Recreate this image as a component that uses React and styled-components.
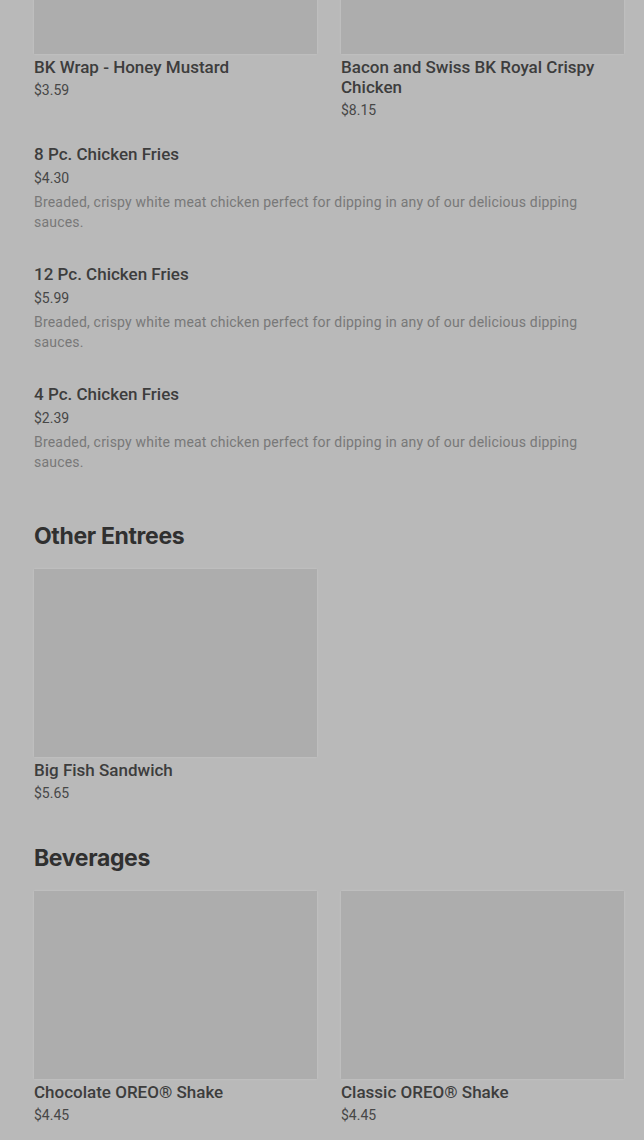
import React from 'react';
import styled, { createGlobalStyle } from 'styled-components';

const GlobalStyle = createGlobalStyle`
  html, body {
    margin: 0;
    padding: 0;
    background: #b9b9b9;
  }
  body {
    font-family: Roboto, "Liberation Sans", sans-serif;
    color: #3a3a3a;
  }
`;

// the page is scrolled: the first row of pictures is cut off at the top
const Page = styled.main`
  margin-top: -134px;
  padding: 0 20px 40px 34px;
`;

const Section = styled.section`
  margin-bottom: 39px;
`;

const Heading = styled.h2`
  margin: 0 0 18px;
  font-family: Inter, "Liberation Sans", sans-serif;
  font-size: 23px;
  font-weight: 700;
  line-height: 30px;
  letter-spacing: -0.35px;
  color: #303030;
`;

const Grid = styled.div`
  display: grid;
  grid-template-columns: 1fr 1fr;
  column-gap: 24px;
`;

const Card = styled.div`
  display: flex;
  flex-direction: column;
`;

const Picture = styled.div`
  height: 188px;
  background: #adadad;
  box-shadow: 0 0 2px rgba(255, 255, 255, 0.25);
`;

const Name = styled.div`
  margin-top: 3px;
  font-size: 17px;
  font-weight: 500;
  line-height: 20px;
  color: #3d3d3d;
`;

const Price = styled.div`
  margin-top: 2px;
  font-size: 14px;
  line-height: 22px;
  color: #474747;
`;

const List = styled.div`
  padding-bottom: 1px;
`;

const Item = styled.div`
  padding: 21px 0 9px;
`;

const ItemName = styled.div`
  font-size: 17px;
  font-weight: 500;
  line-height: 24px;
  color: #3d3d3d;
`;

const ItemPrice = styled.div`
  font-size: 14px;
  line-height: 24px;
  color: #474747;
`;

const Description = styled.p`
  margin: 2px 0 0;
  padding-right: 30px;
  font-size: 14px;
  line-height: 20px;
  letter-spacing: 0.2px;
  color: #787878;
`;

const fries =
  'Breaded, crispy white meat chicken perfect for dipping in any of our delicious dipping sauces.';

const menu = [
  {
    title: null,
    cards: [
      { name: 'BK Wrap - Honey Mustard', price: '$3.59' },
      { name: 'Bacon and Swiss BK Royal Crispy Chicken', price: '$8.15' },
    ],
    items: [
      { name: '8 Pc. Chicken Fries', price: '$4.30', text: fries },
      { name: '12 Pc. Chicken Fries', price: '$5.99', text: fries },
      { name: '4 Pc. Chicken Fries', price: '$2.39', text: fries },
    ],
  },
  {
    title: 'Other Entrees',
    cards: [{ name: 'Big Fish Sandwich', price: '$5.65' }],
    items: [],
  },
  {
    title: 'Beverages',
    cards: [
      { name: 'Chocolate OREO® Shake', price: '$4.45' },
      { name: 'Classic OREO® Shake', price: '$4.45' },
    ],
    items: [],
  },
];

const App = () => (
  <>
    <GlobalStyle />
    <Page>
      {menu.map((section, i) => (
        <Section key={i}>
          {section.title && <Heading>{section.title}</Heading>}
          <Grid>
            {section.cards.map((card) => (
              <Card key={card.name}>
                <Picture />
                <Name>{card.name}</Name>
                <Price>{card.price}</Price>
              </Card>
            ))}
          </Grid>
          {section.items.length > 0 && (
            <List>
              {section.items.map((item) => (
                <Item key={item.name}>
                  <ItemName>{item.name}</ItemName>
                  <ItemPrice>{item.price}</ItemPrice>
                  <Description>{item.text}</Description>
                </Item>
              ))}
            </List>
          )}
        </Section>
      ))}
    </Page>
  </>
);

export default App;
